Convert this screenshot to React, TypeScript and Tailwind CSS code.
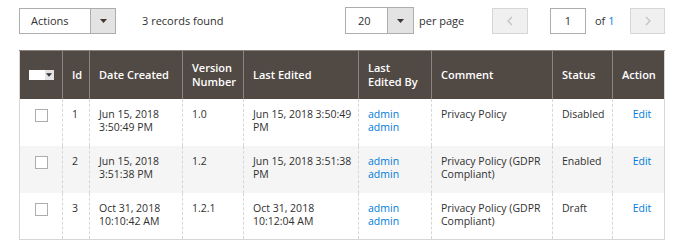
const rows = [
  {
    id: "1",
    created: ["Jun 15, 2018", "3:50:49 PM"],
    version: "1.0",
    edited: ["Jun 15, 2018 3:50:49", "PM"],
    comment: ["Privacy Policy"],
    status: "Disabled",
  },
  {
    id: "2",
    created: ["Jun 15, 2018", "3:51:38 PM"],
    version: "1.2",
    edited: ["Jun 15, 2018 3:51:38", "PM"],
    comment: ["Privacy Policy (GDPR", "Compliant)"],
    status: "Enabled",
  },
  {
    id: "3",
    created: ["Oct 31, 2018", "10:10:42 AM"],
    version: "1.2.1",
    edited: ["Oct 31, 2018", "10:12:04 AM"],
    comment: ["Privacy Policy (GDPR", "Compliant)"],
    status: "Draft",
  },
];

const Caret = () => (
  <svg width="7" height="4" viewBox="0 0 7 4">
    <path d="M0 0h7L3.5 4z" fill="#41362f" />
  </svg>
);

const Lines = ({ lines }: { lines: string[] }) => (
  <>
    {lines.map((l) => (
      <div key={l} className="whitespace-nowrap">
        {l}
      </div>
    ))}
  </>
);

const th = "border-l border-[#8a837f] pl-[9px] pr-[2px] text-left font-semibold align-middle whitespace-nowrap";
const td = "border-l border-dashed border-[#d6d6d6] pl-[9px] pr-[2px] pt-[9px] align-top whitespace-nowrap";

const App = () => {
  return (
    <div className="w-[685px] h-[248px] bg-white text-[10.5px] leading-[13.5px] text-[#303030] font-['Open_Sans',sans-serif]">
      <div className="flex items-center h-[40px] pl-[19px] pt-[1px] whitespace-nowrap text-[11px]">
        <div className="flex h-[26px] w-[97px] border border-[#adadad]">
          <div className="flex-1 flex items-center pl-[11px]">Actions</div>
          <div className="w-[25px] border-l border-[#adadad] bg-[#e3e3e3] flex items-center justify-center">
            <Caret />
          </div>
        </div>
        <span className="ml-[26px] w-[81px]">3 records found</span>
        <div className="ml-[122px] flex h-[27px] w-[69px] border border-[#adadad]">
          <div className="flex-1 flex items-center pl-[12px]">20</div>
          <div className="w-[26px] border-l border-[#adadad] bg-[#e3e3e3] flex items-center justify-center">
            <Caret />
          </div>
        </div>
        <span className="ml-[5px] w-[46px]">per page</span>
        <button className="ml-[27px] h-[26px] w-[36px] bg-[#f0f0f0] border border-[#d6d6d6] flex items-center justify-center">
          <svg width="6" height="10" viewBox="0 0 6 10">
            <path d="M5 1L1 5l4 4" fill="none" stroke="#c2c2c2" strokeWidth="1.3" />
          </svg>
        </button>
        <div className="ml-[22px] h-[26px] w-[36px] border border-[#adadad] flex items-center justify-center">
          1
        </div>
        <span className="ml-[9px] w-[20px]">
          of <span className="text-[#007bdb]">1</span>
        </span>
        <button className="ml-[15px] h-[26px] w-[35px] bg-[#f0f0f0] border border-[#d6d6d6] flex items-center justify-center">
          <svg width="6" height="10" viewBox="0 0 6 10">
            <path d="M1 1l4 4-4 4" fill="none" stroke="#c2c2c2" strokeWidth="1.3" />
          </svg>
        </button>
      </div>
      <table className="ml-[19px] mt-[10px] w-[646px] border-collapse table-fixed border border-[#d6d6d6]">
        <colgroup>
          <col className="w-[43px]" />
          <col className="w-[27px]" />
          <col className="w-[93px]" />
          <col className="w-[61px]" />
          <col className="w-[115px]" />
          <col className="w-[73px]" />
          <col className="w-[121px]" />
          <col className="w-[60px]" />
          <col className="w-[52px]" />
        </colgroup>
        <thead>
          <tr className="h-[48px] bg-[#514943] text-white text-[11px] border-t border-[#8a837f]">
            <th className="px-0 align-middle border-[#514943]">
              <div className="flex justify-center">
                <div className="flex h-[10px] w-[25px]">
                  <div className="w-[16px] bg-white" />
                  <div className="flex-1 bg-[#e3e3e3] flex items-center justify-center">
                    <svg width="6" height="4" viewBox="0 0 7 4">
                      <path d="M0 0h7L3.5 4z" fill="#303030" />
                    </svg>
                  </div>
                </div>
              </div>
            </th>
            <th className={th}>Id</th>
            <th className={th}>Date Created</th>
            <th className={th}>
              Version
              <br />
              Number
            </th>
            <th className={th}>Last Edited</th>
            <th className={th}>
              Last
              <br />
              Edited By
            </th>
            <th className={th}>Comment</th>
            <th className={th}>Status</th>
            <th className={th + " text-center"}>Action</th>
          </tr>
        </thead>
        <tbody>
          {rows.map((r, i) => (
            <tr key={r.id} className={"h-[47px] " + (i === 1 ? "bg-[#f5f5f5]" : "bg-white")}>
              <td className="pt-[10px] align-top">
                <div className="mx-auto h-[13px] w-[13px] border border-[#adadad] bg-white" />
              </td>
              <td className={td}>{r.id}</td>
              <td className={td}>
                <Lines lines={r.created} />
              </td>
              <td className={td}>{r.version}</td>
              <td className={td}>
                <Lines lines={r.edited} />
              </td>
              <td className={td + " text-[#007bdb]"}>
                <div>admin</div>
                <div>admin</div>
              </td>
              <td className={td}>
                <Lines lines={r.comment} />
              </td>
              <td className={td}>{r.status}</td>
              <td className={td + " text-center text-[#007bdb]"}>Edit</td>
            </tr>
          ))}
        </tbody>
      </table>
    </div>
  );
};

export default App;
